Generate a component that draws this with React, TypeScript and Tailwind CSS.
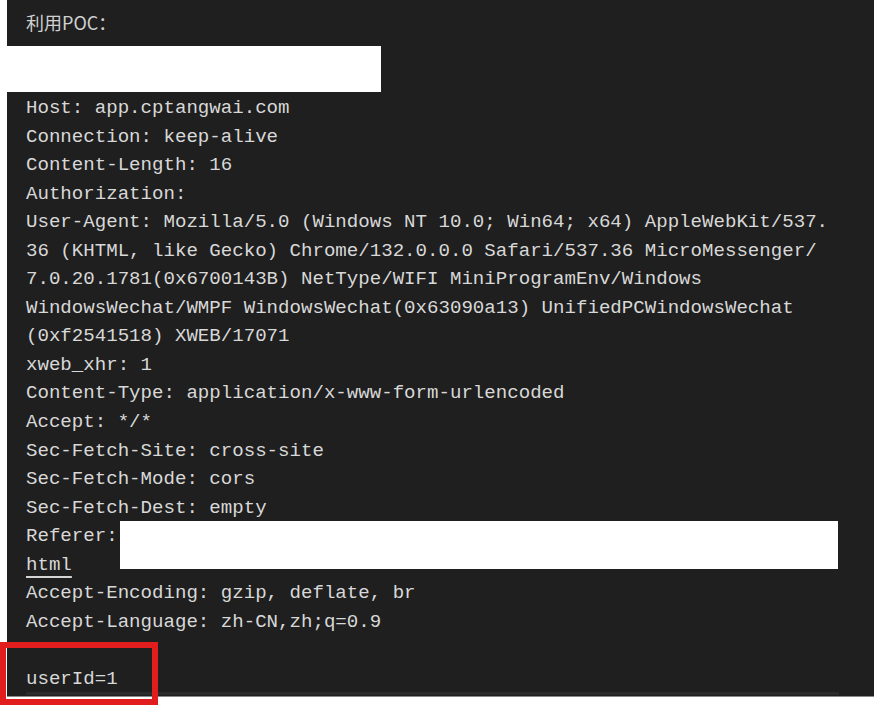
import React from "react";

const lines: string[] = [
  "Host: app.cptangwai.com",
  "Connection: keep-alive",
  "Content-Length: 16",
  "Authorization:",
  "User-Agent: Mozilla/5.0 (Windows NT 10.0; Win64; x64) AppleWebKit/537.",
  "36 (KHTML, like Gecko) Chrome/132.0.0.0 Safari/537.36 MicroMessenger/",
  "7.0.20.1781(0x6700143B) NetType/WIFI MiniProgramEnv/Windows",
  "WindowsWechat/WMPF WindowsWechat(0x63090a13) UnifiedPCWindowsWechat",
  "(0xf2541518) XWEB/17071",
  "xweb_xhr: 1",
  "Content-Type: application/x-www-form-urlencoded",
  "Accept: */*",
  "Sec-Fetch-Site: cross-site",
  "Sec-Fetch-Mode: cors",
  "Sec-Fetch-Dest: empty",
  "Referer:",
];

const tail: string[] = [
  "Accept-Encoding: gzip, deflate, br",
  "Accept-Language: zh-CN,zh;q=0.9",
  "",
  "userId=1",
];

export default function App() {
  return (
    <div className="relative w-[874px] h-[710px] bg-white overflow-hidden">
      <div className="ml-[7px] h-[697px] bg-[#1f1f1f] border-b border-[#8a8a8a] flex flex-col pl-[19px]">
        <div
          className="h-[46px] pt-[8px] text-[18px] leading-[28px] text-[#d0d0d0]"
          style={{ fontFamily: '"Noto Sans CJK SC", "Noto Sans", sans-serif' }}
        >
          利用POC：
        </div>
        <div className="-ml-[26px] w-[381px] h-[46px] bg-white" />
        <div
          className="mt-[2px] flex flex-col text-[19.1px] leading-[28.55px] text-[#d8d8d8] whitespace-pre"
          style={{ fontFamily: '"Liberation Mono", "DejaVu Sans Mono", monospace' }}
        >
          {lines.map((l, i) => (
            <div key={i} className="h-[28.55px]">
              {l}
            </div>
          ))}
          <div className="h-[28.55px]">
            <span className="underline decoration-2 underline-offset-[6px] decoration-[#d4d4d4]">html</span>
          </div>
          {tail.map((l, i) => (
            <div key={"t" + i} className="h-[28.55px]">
              {l}
            </div>
          ))}
        </div>
        <div className="mt-[-1px] w-[813px] h-[3px] bg-[#2b2b2b]" />
      </div>
      <div className="absolute left-[120px] top-[521px] w-[718px] h-[48px] bg-white" />
      <div className="absolute left-0 top-[642px] w-[158px] h-[63px] border-[6px] border-[#e21d1d]" />
    </div>
  );
}
